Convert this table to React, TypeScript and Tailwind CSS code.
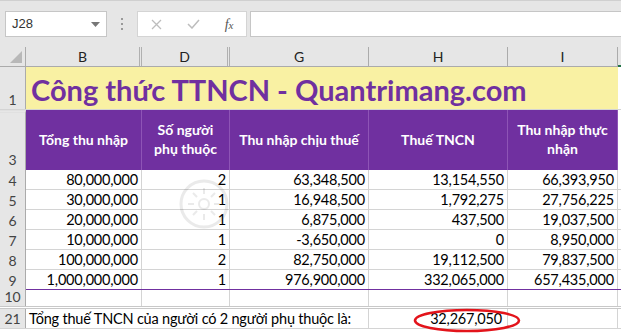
import React from 'react'

const font = { fontFamily: 'Lato, "Open Sans", "Liberation Sans", sans-serif' }

const widths = [26, 116, 88, 139, 139, 110]

const rows = [
  { n: '4', b: '80,000,000', d: '2', g: '63,348,500', h: '13,154,550', i: '66,393,950' },
  { n: '5', b: '30,000,000', d: '1', g: '16,948,500', h: '1,792,275', i: '27,756,225' },
  { n: '6', b: '20,000,000', d: '1', g: '6,875,000', h: '437,500', i: '19,037,500' },
  { n: '7', b: '10,000,000', d: '1', g: '-3,650,000', h: '0', i: '8,950,000' },
  { n: '8', b: '100,000,000', d: '2', g: '82,750,000', h: '19,112,500', i: '79,837,500' },
  { n: '9', b: '1,000,000,000', d: '1', g: '976,900,000', h: '332,065,000', i: '657,435,000' },
]

const RowHead = ({ n, h }: { n: string; h: string }) => (
  <div
    className={`w-[26px] shrink-0 ${h} bg-[#e6e6e6] border-r border-[#ababab] flex items-end justify-center text-[14px] text-[#444] leading-none`}
  >
    <span className="mb-[2px]">{n}</span>
  </div>
)

const Cell = ({ w, children }: { w: number; children?: React.ReactNode }) => (
  <div
    style={{ width: w }}
    className="shrink-0 h-full flex items-center justify-end pr-[3px] border-r border-[#d4d4d4] text-[14.5px] text-black tracking-[-0.2px]"
  >
    {children}
  </div>
)

const ColHead = ({ w, label, hidden }: { w: number; label: string; hidden?: boolean }) => (
  <div
    style={{ width: w }}
    className={`shrink-0 h-full flex items-center justify-center text-[14px] text-[#222] ${hidden ? 'border-r-[3px] border-double border-[#b0b0b0]' : 'border-r border-[#ababab]'}`}
  >
    {label}
  </div>
)

export default function App() {
  return (
    <div className="w-[621px] h-[333px] bg-white overflow-hidden relative" style={font}>
      {/* formula bar */}
      <div className="h-[47px] bg-[#e6e6e6] border-t border-[#d0d0d0] flex items-start pt-[10px]">
        <div className="ml-[5px] w-[102px] h-[26px] bg-white border border-[#c6c6c6] flex items-center justify-between pl-[6px] pr-[6px] text-[#333]">
          <span style={{ fontFamily: '"Liberation Sans", sans-serif' }} className="text-[13px]">J28</span>
          <svg width="9" height="5" viewBox="0 0 9 5">
            <path d="M0 0h9L4.5 5z" fill="#777" />
          </svg>
        </div>
        <div className="w-[30px] h-[26px] flex flex-col items-center justify-center gap-[3px]">
          <span className="w-[2px] h-[2px] bg-[#999]" />
          <span className="w-[2px] h-[2px] bg-[#999]" />
          <span className="w-[2px] h-[2px] bg-[#999]" />
        </div>
        <div className="w-[110px] h-[26px] bg-white border border-[#d4d4d4] flex items-center justify-around">
          <svg width="11" height="11" viewBox="0 0 11 11">
            <path d="M1 1l9 9M10 1l-9 9" stroke="#bdbdbd" strokeWidth="1.3" />
          </svg>
          <svg width="13" height="10" viewBox="0 0 13 10">
            <path d="M1 5l4 4 7-8" stroke="#bdbdbd" strokeWidth="1.5" fill="none" />
          </svg>
          <span className="italic text-[14px] text-[#555]" style={{ fontFamily: '"Liberation Serif", serif' }}>
            f<span className="text-[11px]">x</span>
          </span>
        </div>
        <div className="ml-[3px] flex-1 h-[26px] bg-white border border-[#c6c6c6] border-r-0" />
      </div>

      {/* column headers */}
      <div className="h-[20px] flex bg-[#e6e6e6] border-b border-[#ababab]">
        <div className="w-[26px] shrink-0 h-full border-r border-[#ababab] relative">
          <svg className="absolute right-[3px] bottom-[3px]" width="12" height="12" viewBox="0 0 12 12">
            <path d="M12 0v12H0z" fill="#b8b8b8" />
          </svg>
        </div>
        <ColHead w={116} label="B" hidden />
        <ColHead w={88} label="D" hidden />
        <ColHead w={139} label="G" />
        <ColHead w={139} label="H" />
        <ColHead w={110} label="I" />
        <div className="flex-1 h-full border-b-2 border-[#217346] mt-[1px]" />
      </div>

      {/* row 1: title */}
      <div className="h-[43px] flex border-b border-[#d4d4d4]">
        <RowHead n="1" h="h-full" />
        <div className="w-[592px] bg-[#f9f1a3] flex items-center pl-[5px] pt-[3px] text-[29px] font-bold text-[#7030a0] leading-none whitespace-nowrap">
          Công thức TTNCN - Quantrimang.com
        </div>
      </div>

      {/* row 3: headers */}
      <div className="h-[60px] flex">
        <div className="w-[26px] shrink-0 h-full bg-[#e6e6e6] border-r border-[#ababab] border-t-[3px] border-t-[#e0e0e0] border-double flex items-end justify-center text-[14px] text-[#444] pb-[3px] leading-none">
          3
        </div>
        {[
          ['Tổng thu nhập'],
          ['Số người', 'phụ thuộc'],
          ['Thu nhập chịu thuế'],
          ['Thuế TNCN'],
          ['Thu nhập thực', 'nhận'],
        ].map((lines, idx) => (
          <div
            key={idx}
            style={{ width: widths[idx + 1] }}
            className="shrink-0 h-full bg-[#7030a0] border-r border-[#8e54b6] flex flex-col items-center justify-center text-white font-bold text-[14px] leading-[19px] pb-[2px]"
          >
            {lines.map((l) => (
              <span key={l}>{l}</span>
            ))}
          </div>
        ))}
      </div>

      {/* data rows */}
      {rows.map((r, idx) => (
        <div
          key={r.n}
          className={`h-[20px] flex border-b ${idx === rows.length - 1 ? 'border-[#7030a0]' : 'border-[#d4d4d4]'}`}
        >
          <RowHead n={r.n} h="h-[20px] -mb-px" />
          <Cell w={116}>{r.b}</Cell>
          <Cell w={88}>{r.d}</Cell>
          <Cell w={139}>{r.g}</Cell>
          <Cell w={139}>{r.h}</Cell>
          <Cell w={110}>{r.i}</Cell>
        </div>
      ))}

      {/* row 10 */}
      <div className="h-[19px] flex border-b-[3px] border-double border-[#c8c8c8]">
        <RowHead n="10" h="h-full" />
        <Cell w={116} />
        <Cell w={88} />
        <Cell w={139} />
        <Cell w={139} />
        <Cell w={110} />
      </div>

      {/* row 21 */}
      <div className="h-[20px] flex border-b border-[#d4d4d4]">
        <RowHead n="21" h="h-full" />
        <div className="w-[343px] shrink-0 h-full flex items-center pl-[3px] text-[14.5px] text-black whitespace-nowrap tracking-[-0.2px] border-r border-[#d4d4d4]">
          Tổng thuế TNCN của người có 2 người phụ thuộc là:
        </div>
        <Cell w={139}>
          <span className="mr-[2px]">32,267,050</span>
        </Cell>
        <Cell w={110} />
      </div>

      {/* watermark logo */}
      <svg className="absolute left-[178px] top-[178px] opacity-[0.08] pointer-events-none" width="52" height="52" viewBox="0 0 52 52">
        <circle cx="26" cy="26" r="23" fill="none" stroke="#000" strokeWidth="3" />
        <circle cx="26" cy="26" r="5" fill="none" stroke="#000" strokeWidth="2" />
        <path d="M26 10v6M26 36v6M10 26h6M36 26h6M15 15l4 4M33 33l4 4M37 15l-4 4M15 37l4-4" stroke="#000" strokeWidth="2" />
      </svg>

      {/* red highlight ellipse */}
      <svg className="absolute left-[412px] top-[308px]" width="110" height="25" viewBox="0 0 110 25">
        <ellipse cx="55" cy="12.5" rx="52" ry="10.5" fill="none" stroke="#e3141b" strokeWidth="2.6" />
      </svg>
    </div>
  )
}
